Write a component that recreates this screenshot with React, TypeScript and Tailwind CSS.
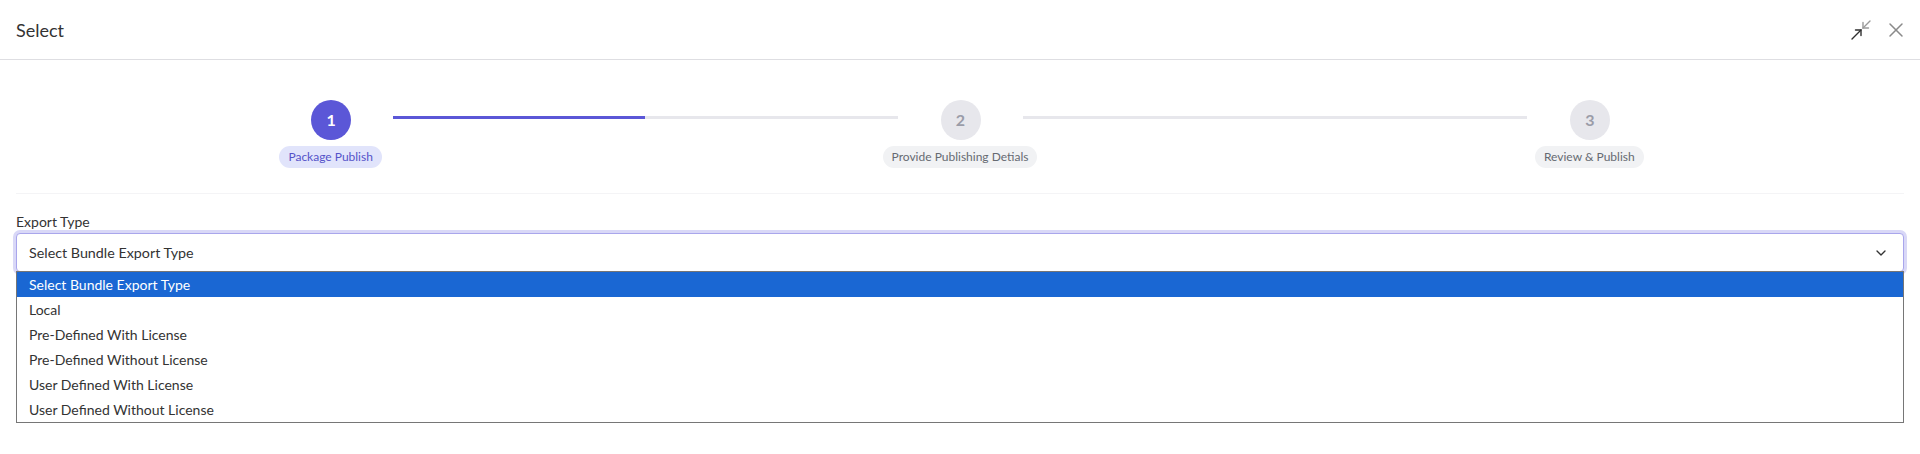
import { ChevronDown } from "lucide-react";

const steps = [
  { n: 1, label: "Package Publish" },
  { n: 2, label: "Provide Publishing Detials" },
  { n: 3, label: "Review & Publish" },
];

const options = [
  "Select Bundle Export Type",
  "Local",
  "Pre-Defined With License",
  "Pre-Defined Without License",
  "User Defined With License",
  "User Defined Without License",
];

const activeStep = 1;

function CompressIcon() {
  return (
    <svg width="20" height="20" viewBox="0 0 20 20" fill="none" strokeWidth="1.4" strokeLinecap="round">
      <g stroke="#2f2f2f">
        <path d="M1 19 L10 10" />
        <path d="M4.5 10 H10 V15.5" />
      </g>
      <g stroke="#9a9a9a">
        <path d="M19 1 L12 8" />
        <path d="M12 2.5 V8 H17.5" />
      </g>
    </svg>
  );
}

function CloseIcon() {
  return (
    <svg width="16" height="16" viewBox="0 0 16 16" fill="none" stroke="#8a8a8a" strokeWidth="1.5" strokeLinecap="round">
      <path d="M2 2 L14 14" />
      <path d="M14 2 L2 14" />
    </svg>
  );
}

export default function App() {
  return (
    <div className="w-[1920px] h-[454px] bg-white font-['Lato',sans-serif] text-[#333]">
      {/* Header */}
      <div className="h-[60px] border-b border-[#dedee2] flex items-center justify-between pl-4 pr-4">
        <h2 className="text-[18px] leading-none mt-[1px]">Select</h2>
        <div className="flex items-center gap-[17px] mt-[1px]">
          <button className="flex items-center">
            <CompressIcon />
          </button>
          <button className="flex items-center">
            <CloseIcon />
          </button>
        </div>
      </div>

      {/* Stepper */}
      <div className="px-4 pt-[40px]">
        <div className="grid grid-cols-3 pb-[25px] border-b border-[#f4f4f6]">
          {steps.map((s, i) => {
            const isActive = s.n === activeStep;
            const leftDone = s.n <= activeStep && i > 0;
            const rightDone = s.n <= activeStep;
            return (
              <div key={s.n} className="flex flex-col items-center">
                <div className="w-full flex items-start">
                  <div
                    className={`flex-1 h-[3px] mt-[16px] mr-[43px] ${
                      i === 0 ? "bg-transparent" : leftDone ? "bg-[#5b57d7]" : "bg-[#e7e7ec]"
                    }`}
                  />
                  <div
                    className={`w-10 h-10 rounded-full flex items-center justify-center text-[16px] font-bold ${
                      isActive ? "bg-[#5b57d7] text-white" : "bg-[#e7e7ec] text-[#9a9ca8]"
                    }`}
                  >
                    {s.n}
                  </div>
                  <div
                    className={`flex-1 h-[3px] mt-[16px] ml-[42px] ${
                      i === steps.length - 1
                        ? "bg-transparent"
                        : rightDone
                        ? "bg-[#5b57d7]"
                        : "bg-[#e7e7ec]"
                    }`}
                  />
                </div>
                <span
                  className={`mt-[6px] px-[9px] h-[22px] flex items-center rounded-full text-[12px] ${
                    isActive ? "bg-[#e1e4fb] text-[#5553c9]" : "bg-[#f1f2f4] text-[#666a72]"
                  }`}
                >
                  {s.label}
                </span>
              </div>
            );
          })}
        </div>
      </div>

      {/* Export type field */}
      <div className="px-4 pt-[19px]">
        <label className="block text-[14px] leading-[17px] mb-[3px] text-[#333]">Export Type</label>
        <div className="relative">
          <div className="h-[39px] rounded-[4px] border border-[#a9a6ec] shadow-[0_0_0_3px_#d9d8f7] bg-white flex items-center justify-between pl-[12px] pr-[14px]">
            <span className="text-[14.3px] text-[#333]">Select Bundle Export Type</span>
            <ChevronDown size={16} strokeWidth={2} className="text-[#333]" />
          </div>

          {/* open option list */}
          <ul className="absolute left-0 right-0 top-[38px] bg-white border border-[#767676] z-10">
            {options.map((o, i) => (
              <li
                key={o}
                className={`h-[25px] flex items-center px-[12px] text-[14px] ${
                  i === 0 ? "bg-[#1a67d3] text-white" : "text-[#333]"
                }`}
              >
                {o}
              </li>
            ))}
          </ul>
        </div>
      </div>
    </div>
  );
}
